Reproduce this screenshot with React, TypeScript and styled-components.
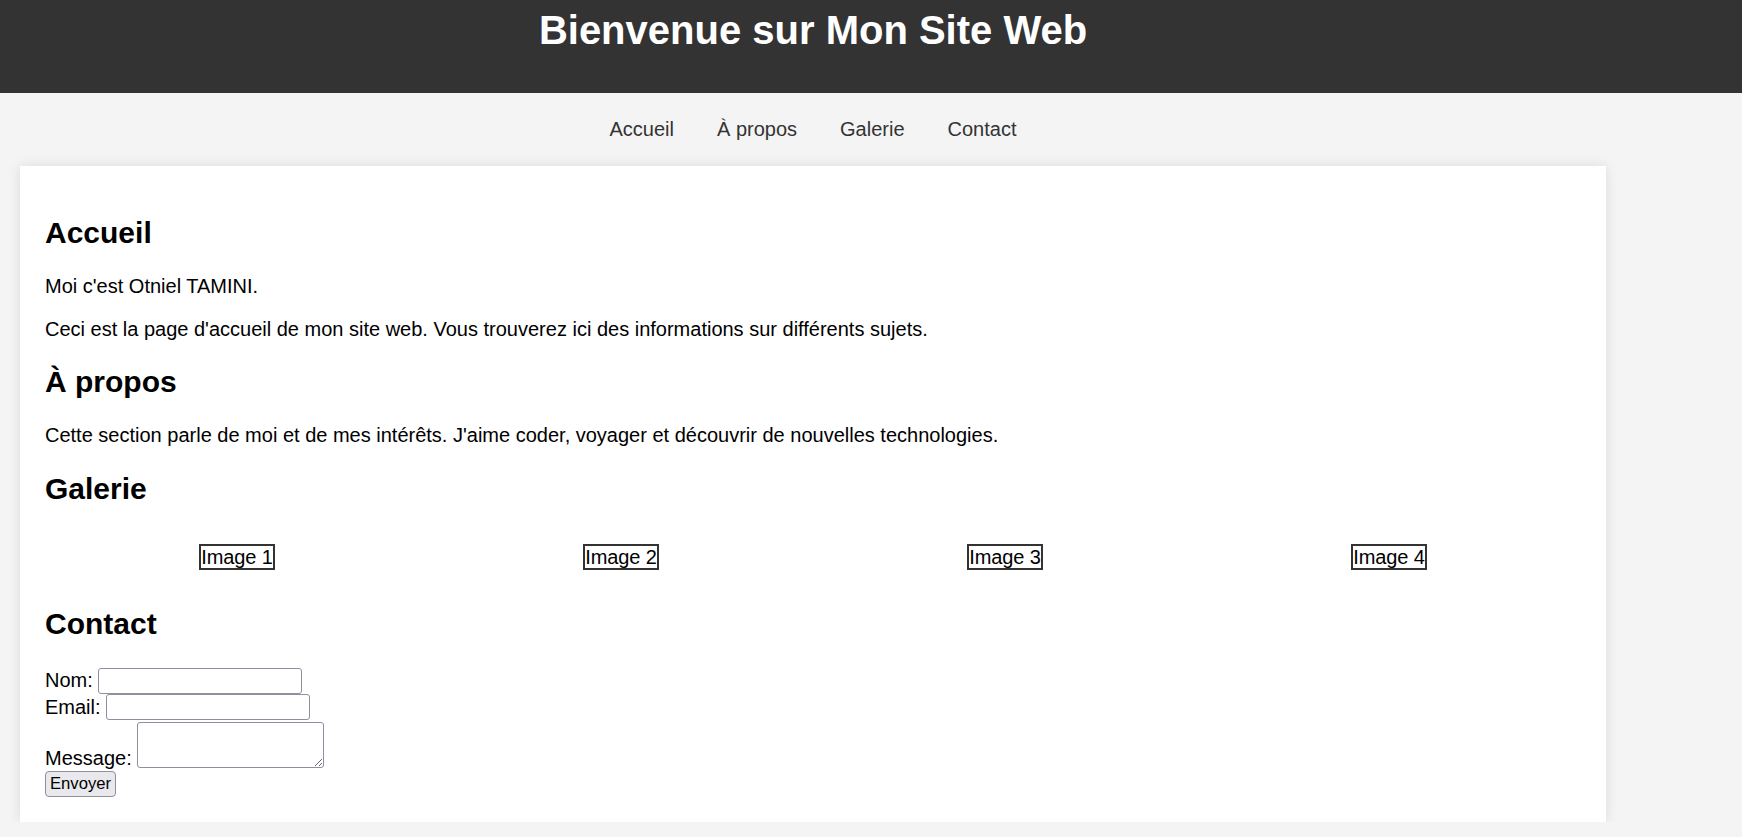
import React from "react";
import styled, { createGlobalStyle } from "styled-components";

const GlobalStyle = createGlobalStyle`
  html, body {
    margin: 0;
    padding: 0;
    background: #f4f4f4;
  }
  body {
    font-family: "Liberation Sans", Arial, sans-serif;
    font-size: 20px;
    color: #000;
  }
`;

const Header = styled.header`
  background: #333;
  color: #fff;
  padding: 7px 0 40px;
`;

const Column = styled.div`
  width: 1626px;
`;

const Title = styled.h1`
  margin: 0;
  font-size: 40px;
  line-height: 46px;
  font-weight: bold;
  text-align: center;
`;

const Nav = styled.nav`
  display: flex;
  justify-content: center;
  gap: 43px;
  padding: 25px 0;
`;

const NavLink = styled.a`
  color: #333;
  text-decoration: none;
  font-size: 20px;
  line-height: 23px;
  cursor: pointer;
`;

const Card = styled.main`
  margin: 0 20px;
  background: #fff;
  padding: 25px;
  box-shadow: 0 0 12px rgba(0, 0, 0, 0.1);
`;

const Section = styled.section``;

const Heading = styled.h2`
  font-size: 30px;
  line-height: 34.5px;
  margin: 24.6px 0;
  font-weight: bold;
`;

const Text = styled.p`
  margin: 20px 0;
  line-height: 23px;
`;

const Gallery = styled.div`
  display: grid;
  grid-template-columns: repeat(4, 1fr);
  justify-items: center;
  padding: 12.5px 0;
`;

const ImageBox = styled.span`
  display: inline-block;
  border: 2px solid #333;
  line-height: 22.5px;
  padding: 0;
  font-size: 20px;
  letter-spacing: -0.1px;
`;

const Form = styled.form`
  margin: 0;
`;

const FormRow = styled.div<{ $align?: string; $pad?: string; $h?: string }>`
  display: flex;
  align-items: ${(p) => p.$align || "center"};
  gap: 5.5px;
  padding-top: ${(p) => p.$pad || "0"};
  ${(p) => (p.$h ? `height: ${p.$h};` : "")}
`;

const Label = styled.label`
  line-height: 23px;
`;

const TextInput = styled.input`
  box-sizing: border-box;
  width: 204px;
  height: 26px;
  border: 1px solid #8f8f9d;
  border-radius: 3px;
  padding: 1px 3px;
  background: #fff;
  font-family: "Liberation Sans", Arial, sans-serif;
  font-size: 16.67px;
  margin: 0;
`;

const MessageArea = styled.textarea`
  box-sizing: border-box;
  width: 187px;
  height: 46px;
  border: 1px solid #8f8f9d;
  border-radius: 3px;
  padding: 2px 3px;
  background: #fff;
  font-family: "Liberation Sans", Arial, sans-serif;
  font-size: 16.67px;
  margin: 0 0 1.5px 0;
`;

const SubmitButton = styled.button`
  box-sizing: border-box;
  height: 25.4px;
  padding: 0 4px;
  border: 1px solid #8f8f9d;
  border-radius: 4px;
  background: #e9e9ed;
  color: #000;
  font-family: "Liberation Sans", Arial, sans-serif;
  font-size: 16.67px;
  line-height: 20px;
  margin: 0;
`;

const navItems = ["Accueil", "À propos", "Galerie", "Contact"];
const images = ["Image 1", "Image 2", "Image 3", "Image 4"];

export default function App() {
  return (
    <>
      <GlobalStyle />
      <Header>
        <Column>
          <Title>Bienvenue sur Mon Site Web</Title>
        </Column>
      </Header>
      <Column>
        <Nav>
          {navItems.map((n) => (
            <NavLink key={n}>{n}</NavLink>
          ))}
        </Nav>
        <Card>
          <Section>
            <Heading>Accueil</Heading>
            <Text>Moi c'est Otniel TAMINI.</Text>
            <Text>
              Ceci est la page d'accueil de mon site web. Vous trouverez ici des
              informations sur différents sujets.
            </Text>
          </Section>
          <Section>
            <Heading>À propos</Heading>
            <Text>
              Cette section parle de moi et de mes intérêts. J'aime coder,
              voyager et découvrir de nouvelles technologies.
            </Text>
          </Section>
          <Section>
            <Heading>Galerie</Heading>
            <Gallery>
              {images.map((i) => (
                <ImageBox key={i}>{i}</ImageBox>
              ))}
            </Gallery>
          </Section>
          <Section>
            <Heading>Contact</Heading>
            <Form onSubmit={(e) => e.preventDefault()}>
              <FormRow $pad="1px" $h="26.5px">
                <Label htmlFor="nom">Nom:</Label>
                <TextInput id="nom" type="text" />
              </FormRow>
              <FormRow $h="26.5px">
                <Label htmlFor="email">Email:</Label>
                <TextInput id="email" type="email" />
              </FormRow>
              <FormRow $align="flex-end" $pad="2px">
                <Label htmlFor="message">Message:</Label>
                <MessageArea id="message" />
              </FormRow>
              <FormRow $pad="1.7px">
                <SubmitButton type="submit">Envoyer</SubmitButton>
              </FormRow>
            </Form>
          </Section>
        </Card>
      </Column>
    </>
  );
}
